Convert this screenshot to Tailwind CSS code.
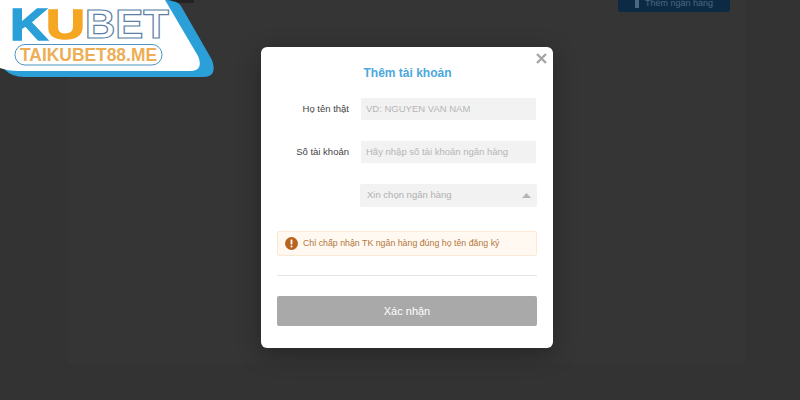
<!DOCTYPE html>
<html lang="vi">
<head>
  <meta charset="UTF-8" />
  <title>Thêm tài khoản</title>
  <script src="https://cdn.jsdelivr.net/npm/@tailwindcss/browser@4"></script>
</head>
<body class="font-['Liberation_Sans',Arial,sans-serif] bg-[#333333] overflow-hidden">
  <div class="relative w-[800px] h-[400px] overflow-hidden">

    <!-- trang phia sau lop phu -->
    <div class="ml-[68px] w-[677px] h-[363px] bg-[#353535] flex justify-end items-start pr-[15px]">
      <div class="w-[112px] h-[12px] bg-[#0d2a44] rounded-b-[3px] overflow-hidden flex items-end justify-center gap-[6px] text-[9px] leading-[9px] text-[#4a6880]">
        <span class="mb-[4px] w-[4px] h-[8px] bg-[#4a6880]"></span>
        <span class="mb-[4px]">Thêm ngân hàng</span>
      </div>
    </div>

    <!-- logo -->
    <svg class="absolute left-0 top-0" width="222" height="84" viewBox="0 0 222 84">
      <rect x="172" y="0" width="22" height="3" fill="#232323"/>
      <path d="M168 0 L176 2 Q179 3 181 6 L212 60 Q218 77 203 77 L24 77 Q12 77 5 70 L0 0 Z" fill="#2a9fd8"/>
      <path d="M0 0 L165 0 L198 56 Q204 71 190 71 L18 71 Q8 71 0 68 Z" fill="#ffffff"/>
      <text x="10" y="40" font-family="Liberation Sans" font-weight="700" font-size="44" textLength="38" lengthAdjust="spacingAndGlyphs" fill="#2a9fd8" stroke="#2a9fd8" stroke-width="1.5">K</text>
      <text x="46" y="39" font-family="Liberation Sans" font-weight="700" font-size="43" textLength="39" lengthAdjust="spacingAndGlyphs" fill="#f5a623" stroke="#f5a623" stroke-width="1.5">U</text>
      <text x="85" y="38" font-family="Liberation Sans" font-weight="700" font-size="41" textLength="84" lengthAdjust="spacingAndGlyphs" fill="#ffffff" stroke="#5b7fa6" stroke-width="1.2">BET</text>
      <rect x="15" y="44.5" width="147" height="20.5" rx="10" fill="#ffffff" stroke="#4f94c0" stroke-width="1"/>
      <text x="20" y="61" font-family="Liberation Sans" font-weight="700" font-size="18" textLength="137" lengthAdjust="spacingAndGlyphs" fill="#edae55">TAIKUBET88.ME</text>
    </svg>

    <!-- modal -->
    <div class="absolute left-[261px] top-[47px] w-[292px] h-[301px] bg-white rounded-[6px] shadow-[0_6px_24px_rgba(0,0,0,0.3)] px-4 pt-[18px]">
      <button class="absolute right-[5px] top-[4px] w-[14px] h-[14px] flex items-center justify-center">
        <svg width="11" height="11" viewBox="0 0 11 11"><path d="M1 1 L10 10 M10 1 L1 10" stroke="#a6a6a6" stroke-width="2.4"/></svg>
      </button>
      <h2 class="text-center text-[12px] leading-[16px] font-bold text-[#4aa8dc] pl-[1px]">Thêm tài khoản</h2>

      <div class="flex items-center h-[22px] mt-[17px]">
        <label class="w-[72px] text-right text-[9.5px] text-[#444444]">Họ tên thật</label>
        <div class="ml-[12px] w-[175px] h-full bg-[#f2f2f2] flex items-center px-[5px] text-[9.5px] text-[#b5b5b5]">VD: NGUYEN VAN NAM</div>
      </div>
      <div class="flex items-center h-[22px] mt-[21px]">
        <label class="w-[72px] text-right text-[9.5px] text-[#444444]">Số tài khoản</label>
        <div class="ml-[12px] w-[175px] h-full bg-[#f2f2f2] flex items-center px-[5px] text-[9.5px] text-[#b5b5b5]">Hãy nhập số tài khoản ngân hàng</div>
      </div>
      <div class="flex items-center h-[23px] mt-[21px] ml-[83px] bg-[#f2f2f2] rounded-[2px] pl-[7px] pr-[6px] justify-between text-[9.5px] text-[#b0b0b0]">
        <span>Xin chọn ngân hàng</span>
        <svg width="9" height="5" viewBox="0 0 9 5"><path d="M4.5 0 L9 5 L0 5 Z" fill="#b5b5b5"/></svg>
      </div>

      <div class="flex items-center h-[25px] mt-[24px] bg-[#fff9f2] border border-[#fbe9d6] rounded-[2px] pl-[7px] gap-[5px] text-[8.8px] text-[#b5763a]">
        <svg width="13" height="13" viewBox="0 0 13 13"><circle cx="6.5" cy="6.5" r="6.5" fill="#b8641f"/><rect x="5.6" y="2.6" width="1.8" height="5" rx="0.6" fill="#fff"/><circle cx="6.5" cy="9.6" r="1" fill="#fff"/></svg>
        <span>Chỉ chấp nhận TK ngân hàng đúng họ tên đăng ký</span>
      </div>

      <div class="border-t border-[#e4e4e4] mt-[19px]"></div>

      <button class="block w-full h-[30px] mt-[20px] bg-[#a9a9a9] rounded-[2px] text-white text-[11px]">Xác nhận</button>
    </div>
  </div>
</body>
</html>
